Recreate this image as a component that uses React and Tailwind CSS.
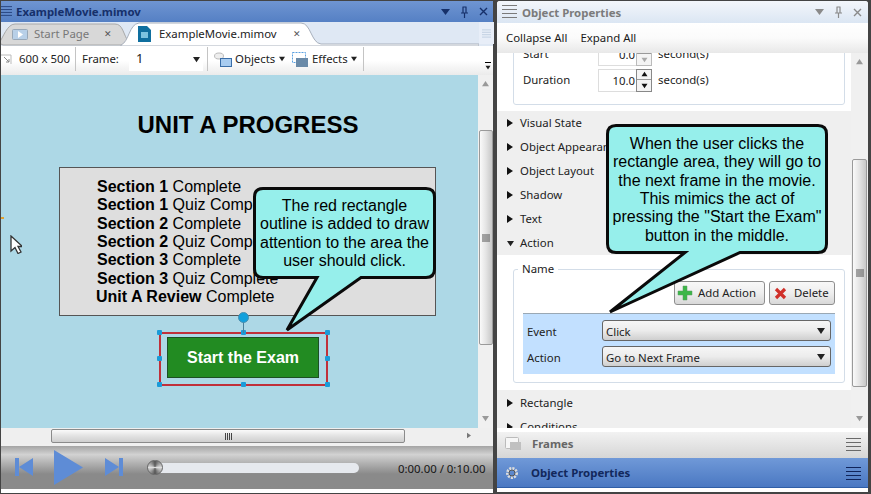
const ui = { fontFamily: '"Noto Sans", sans-serif' };

const Tri = ({ dir = 'right', className = '' }) => {
  const pts = { right: '0,0 6,4 0,8', down: '0,1 8,1 4,7', up: '0,7 8,7 4,1' };
  return (
    <svg viewBox={dir === 'right' ? '0 0 6 8' : '0 0 8 8'} className={className}>
      <polygon points={pts[dir]} fill="currentColor" />
    </svg>
  );
};

const Lines = ({ color, className = '' }) => (
  <svg viewBox="0 0 15 13" className={className}>
    <path d="M0 .5h15M0 4.5h15M0 8.5h15M0 12.5h15" stroke={color} strokeWidth="1" fill="none" />
  </svg>
);

const Grip = () => (
  <svg viewBox="0 0 8 8" className="w-2 h-2">
    <path d="M0 1h8M0 3h8M0 5h8M0 7h8" stroke="#555" strokeWidth="1" />
  </svg>
);

const WindowButtons = ({ color }) => (
  <div className="flex items-center gap-[10px]" style={{ color }}>
    <svg viewBox="0 0 9 6" className="w-[9px] h-[6px]"><polygon points="0,0 9,0 4.5,6" fill="currentColor" /></svg>
    <svg viewBox="0 0 9 12" className="w-[9px] h-3">
      <path d="M2.5 1h4M3 1v6M6 1v6M1 7h7M4.500 7v5" stroke="currentColor" strokeWidth="1.2" fill="none" />
    </svg>
    <svg viewBox="0 0 9 9" className="w-[9px] h-[9px]">
      <path d="M1 1l7 7M8 1l-7 7" stroke="currentColor" strokeWidth="1.4" fill="none" />
    </svg>
  </div>
);

const Sep = ({ className = '' }) => <div className={`w-px h-[24px] bg-[#c4c4c4] ${className}`} />;

function Tabs() {
  return (
    <div className="h-[24px] bg-[#dfe8f4] flex relative text-[11.4px]">
      <svg className="absolute left-0 top-0 w-[478px] h-[24px]" viewBox="0 0 478 24">
        <path d="M-2 21 C2 16 6 2 14 2 H114 C122 2 122 12 128 21 Q126 23 122 23 H2 Z" fill="#d8d8d8" stroke="#a8a8a8" />
        <path d="M120 23 C128 20 128 2 138 1 H300 C310 1 310 21 320 22 H478 V24 H120 Z" fill="#fff" stroke="#a8b0bc" />
      </svg>
      <div className="relative flex items-center w-[125px] pl-[11px] text-[#777]">
        <svg viewBox="0 0 16 11" className="w-4 h-[11px]">
          <rect x="0.500" y="0.500" width="15" height="10" rx="1" fill="#b8d0e8" stroke="#98a8b8" />
          <polygon points="6,2 11,5.500 6,9" fill="#fff" />
        </svg>
        <span className="ml-[6px] w-[70px]">Start Page</span>
        <span className="text-[9px] text-[#555]">✕</span>
      </div>
      <div className="relative flex items-center pl-[12px] text-[#222]">
        <svg viewBox="0 0 13 16" className="w-[13px] h-4">
          <path d="M0 0h9l4 4v12H0z" fill="#0f6f9f" />
          <path d="M3 6h7v6H3z" fill="#7cc4e0" />
        </svg>
        <span className="ml-[8px] w-[134px]">ExampleMovie.mimov</span>
        <span className="text-[9px] text-[#555]">✕</span>
      </div>
      <div className="absolute left-[478px] top-0 w-[15px] h-[22px] bg-[#e8eef8] flex flex-col items-center justify-center">
        <Lines color="#a8bcd4" className="w-[9px] h-[9px]" />
      </div>
    </div>
  );
}

function Toolbar() {
  return (
    <div className="h-[29px] pb-[3px] bg-gradient-to-b from-white via-white to-[#ebebeb] flex items-center text-[11.4px] text-[#222] relative">
      <svg viewBox="0 0 12 10" className="w-3 h-[10px]">
        <path d="M0 1h10v9" stroke="#bbb" fill="none" />
        <path d="M3 3l5 5M8 5v3H5" stroke="#888" fill="none" />
      </svg>
      <span className="ml-[6px] w-[50px] whitespace-nowrap">600 x 500</span>
      <Sep className="ml-[6px]" />
      <span className="ml-[6px] w-[36px]">Frame:</span>
      <div className="ml-[11px] w-[74px] h-[24px] bg-white flex items-center justify-between pl-[7px] pr-[3px] text-[13px]">
        1
        <Tri dir="down" className="w-[7px] h-[7px]" />
      </div>
      <Sep className="ml-[4px]" />
      <svg viewBox="0 0 18 15" className="ml-[6px] w-[18px] h-[15px]">
        <ellipse cx="5" cy="4" rx="4.500" ry="3" fill="#eee" stroke="#bbb" />
        <rect x="6.500" y="6.500" width="11" height="8" fill="#a8ccf0" stroke="#3a6ea8" />
      </svg>
      <span className="ml-[3px] w-[40px]">Objects</span>
      <Tri dir="down" className="ml-[4px] w-[6px] h-[6px]" />
      <svg viewBox="0 0 16 15" className="ml-[7px] w-4 h-[15px]">
        <rect x="0.500" y="0.500" width="13" height="10" fill="none" stroke="#5aa0e0" strokeDasharray="2 1" />
        <rect x="4" y="6" width="12" height="9" fill="#6a8aa8" />
      </svg>
      <span className="ml-[4px] w-[35px]">Effects</span>
      <Tri dir="down" className="ml-[4px] w-[6px] h-[6px]" />
      <Sep className="ml-[6px]" />
      <div className="absolute left-[484px] top-[16px] flex flex-col items-center">
        <div className="w-[6px] h-px bg-black mb-[2px]" />
        <Tri dir="down" className="w-[6px] h-[5px]" />
      </div>
    </div>
  );
}

// the slide itself is a free canvas, objects sit at their own coordinates
function Slide() {
  const rows = [
    ['Section 1', 'Complete'],
    ['Section 1', 'Quiz Complete'],
    ['Section 2', 'Complete'],
    ['Section 2', 'Quiz Complete'],
    ['Section 3', 'Complete'],
    ['Section 3', 'Quiz Complete'],
  ];
  const handles = [
    'left-[-4px] top-[-4px]', 'left-[80px] top-[-4px]', 'left-[164px] top-[-4px]',
    'left-[-4px] top-[22px]', 'left-[164px] top-[22px]',
    'left-[-4px] top-[48px]', 'left-[80px] top-[48px]', 'left-[164px] top-[48px]',
  ];
  return (
    <div className="relative w-[477px] h-[353px] bg-[#add8e6] overflow-hidden" style={{ fontFamily: '"Liberation Sans", sans-serif' }}>
      <div className="absolute left-0 top-[33px] w-[494px] text-center text-[24px] leading-[34px] font-bold text-black">UNIT A PROGRESS</div>
      <div className="absolute left-[58px] top-[92px] w-[377px] h-[149px] bg-[#dedede] border border-[#555] pl-[37px] pt-[10px] text-[16px] leading-[18.33px] text-black">
        {rows.map((r, i) => (
          <div key={i}><b>{r[0]}</b> {r[1]}</div>
        ))}
        <div className="-ml-px"><b>Unit A Review</b> Complete</div>
      </div>
      <div className="absolute left-[158px] top-[257px] w-[169px] h-[54px] border-2 border-[#c0303a]">
        {handles.map(h => (
          <div key={h} className={`absolute w-[5px] h-[5px] rounded-[1px] bg-[#1a9bd8] ${h}`} />
        ))}
        <div className="absolute left-[82px] top-[-15px] w-px h-[14px] bg-[#4a7f9a]" />
        <div className="absolute left-[77px] top-[-22px] w-[11px] h-[11px] rounded-full bg-[#12a0dc] border border-[#4a8fb0]" />
        <div className="absolute left-[6px] top-[3px] w-[152px] h-[41px] bg-[#228b22] border border-[#1d4f24] flex items-center justify-center text-white font-bold text-[16px]">Start the Exam</div>
      </div>
      <svg viewBox="0 0 12 19" className="absolute left-[9px] top-[160px] w-3 h-[19px]">
        <path d="M1 1v15l4-3.500 3 6 3-1.500-3-5.500h4.500z" fill="#fff" stroke="#333" strokeWidth="1.3" />
      </svg>
      <div className="absolute left-0 top-[142px] w-[3px] h-[2px] bg-[#e0a030]" />
    </div>
  );
}

function VScroll({ top, h, thumbWidth }) {
  return (
    <div className="relative flex flex-col items-center bg-[#f0f0f0] h-full">
      <Tri dir="up" className="mt-[5px] w-[7px] h-[7px] text-[#999]" />
      <div style={{ marginTop: top, height: h, width: thumbWidth }}>
        <div className="w-full h-full rounded-[2px] border border-[#9a9a9a] bg-gradient-to-r from-[#fafafa] via-[#e4e4e4] to-[#c8c8c8] flex items-center justify-center">
          <Grip />
        </div>
      </div>
      <Tri dir="down" className="absolute bottom-[6px] w-[7px] h-[7px] text-[#999]" />
    </div>
  );
}

function Player() {
  return (
    <div className="h-[43px] mt-[2px] bg-gradient-to-b from-[#a4a4a4] from-0% via-[#d2d2d2] via-[20%] to-[#8a8a8a] to-[65%] relative text-[11.4px] text-[#151515]">
      <svg viewBox="0 0 18 18" className="absolute left-[14px] top-[12px] w-[18px] h-[18px]">
        <path d="M0 0h4v18H0zM18 0v18L4 9z" fill="#5e8cd6" />
      </svg>
      <svg viewBox="0 0 29 35" className="absolute left-[53px] top-[4px] w-[29px] h-[35px]">
        <path d="M0 0l29 17.500L0 35z" fill="#5e8cd6" />
      </svg>
      <svg viewBox="0 0 18 18" className="absolute left-[104px] top-[12px] w-[18px] h-[18px]">
        <path d="M0 0l14 9L0 18zM14 0h4v18h-4z" fill="#5e8cd6" />
      </svg>
      <div className="absolute left-[147px] top-[17px] w-[211px] h-[10px] rounded-full bg-[#e6e9ee]" />
      <div className="absolute left-[146px] top-[14px] w-[16px] h-[15px] rounded-full border border-[#666] bg-[conic-gradient(#555,#ddd,#555,#ddd,#555)]" />
      <span className="absolute left-[397px] top-[14px]">0:00.00 / 0:10.00</span>
    </div>
  );
}

function Section({ label, open }) {
  return (
    <div className="h-6 flex items-center pl-[10px] text-[11.4px] text-[#222]">
      {open ? <Tri dir="down" className="w-[7px] h-[7px] text-[#222]" /> : <Tri dir="right" className="w-[6px] h-2 text-[#111]" />}
      <span className={open ? 'ml-[6px]' : 'ml-[7px]'}>{label}</span>
    </div>
  );
}

function Spin({ disabled }) {
  const c = disabled ? 'text-[#aaa] border-[#bbb]' : 'text-[#111] border-[#888]';
  return (
    <div className={`w-[16px] h-[23px] border ${c} flex flex-col items-center justify-around bg-[#f4f4f4]`}>
      <Tri dir="up" className="w-[7px] h-[6px]" />
      <div className="w-full h-px bg-[#999]" />
      <Tri dir="down" className="w-[7px] h-[6px]" />
    </div>
  );
}

function Select({ value }) {
  return (
    <div className="w-[229px] h-[21px] rounded-[3px] border border-[#666] bg-gradient-to-b from-[#f6f6f6] via-[#ececec] to-[#cfcfcf] flex items-center justify-between pl-[3px] pr-[5px] text-[11.4px] text-[#222]">
      <span className="pt-[2px]">{value}</span>
      <Tri dir="down" className="w-2 h-2" />
    </div>
  );
}

function ToolButton({ icon, label, className }) {
  return (
    <div className={`h-[24px] rounded-[3px] border border-[#8e8e8e] bg-gradient-to-b from-[#f8f8f8] via-[#eeeeee] to-[#d8d8d8] flex items-center text-[11.4px] text-[#222] ${className}`}>
      {icon}
      {label}
    </div>
  );
}

function Properties() {
  return (
    <div className="flex h-[375px] overflow-hidden">
      <div className="w-[354px] shrink-0 overflow-hidden text-[11.4px] text-[#222]">
        <div className="h-[58px] overflow-hidden bg-white pl-[16px]">
          <div className="-mt-[20px] w-[332px] h-[72px] rounded-[3px] border border-[#d3dde8] pl-[9px] pt-[7px]">
            <div className="flex items-center h-[26px]">
              <span className="w-[75px]">Start</span>
              <div className="w-[38px] h-[23px] leading-[21px] border border-r-0 border-[#dddddd] text-right pr-px">0.0</div>
              <Spin disabled />
              <span className="ml-[6px]">second(s)</span>
            </div>
            <div className="flex items-center h-[26px]">
              <span className="w-[75px]">Duration</span>
              <div className="w-[38px] h-[23px] leading-[21px] border border-r-0 border-[#dddddd] text-right pr-px">10.0</div>
              <Spin />
              <span className="ml-[6px]">second(s)</span>
            </div>
          </div>
        </div>
        <div className="bg-[#efefef]">
          <Section label="Visual State" />
          <Section label="Object Appearance" />
          <Section label="Object Layout" />
          <Section label="Shadow" />
          <Section label="Text" />
          <Section label="Action" open />
        </div>
        <div className="h-[135px] bg-white pl-[16px] pt-[14px]">
          <div className="relative w-[332px] h-[114px] rounded-[3px] border border-[#d3dde8] pt-[11px]">
            <span className="absolute left-[4px] -top-[10px] bg-white px-1">Name</span>
            <div className="flex justify-end gap-[4px] pr-[9px]">
              <ToolButton
                className="w-[91px] pl-[2px]"
                label={<span className="ml-[5px]">Add Action</span>}
                icon={
                  <svg viewBox="0 0 16 16" className="w-4 h-4">
                    <path d="M6 1h4v5h5v4h-5v5H6v-5H1V6h5z" fill="#3cb648" stroke="#5a9a60" strokeWidth=".5" />
                  </svg>
                }
              />
              <ToolButton
                className="w-[66px] pl-[4px]"
                label={<span className="ml-[7px]">Delete</span>}
                icon={
                  <svg viewBox="0 0 13 13" className="w-[13px] h-[13px]">
                    <path d="M2 2l9 9M11 2l-9 9" stroke="#d0302a" strokeWidth="3.200" />
                  </svg>
                }
              />
            </div>
            <div className="mt-[8px] ml-[9px] w-[312px] h-[61px] bg-[#c2e0ff] border-t border-[#9aa8b4] pt-[6px] pl-[4px]">
              <div className="flex items-center">
                <span className="w-[75px] pt-[2px]">Event</span>
                <Select value="Click" />
              </div>
              <div className="flex items-center mt-[5px]">
                <span className="w-[75px] pt-[2px]">Action</span>
                <Select value="Go to Next Frame" />
              </div>
            </div>
          </div>
        </div>
        <div className="bg-[#efefef] h-[40px] pt-px">
          <Section label="Rectangle" />
          <Section label="Conditions" />
        </div>
      </div>
      <div className="w-[17px] ml-0 flex-1">
        <VScroll top={94} h={228} thumbWidth={15} />
      </div>
    </div>
  );
}

function Callout({ className, box, children, textClass }) {
  const { w, h, base, tip } = box;
  const d = `M10 1.500 H${w - 10} Q${w - 1.5} 1.500 ${w - 1.5} 10 V${h - 10} Q${w - 1.5} ${h - 1.5} ${w - 10} ${h - 1.5} H${base[1]} L${tip[0]} ${tip[1]} L${base[0]} ${h - 1.5} H10 Q1.500 ${h - 1.5} 1.500 ${h - 10} V10 Q1.500 1.500 10 1.500 Z`;
  return (
    <div className={`absolute ${className}`}>
      <svg className="absolute left-0 top-0 overflow-visible" width={w} height={tip[1]}>
        <path d={d} fill="#96efeb" stroke="#0a0a0a" strokeWidth="3" strokeLinejoin="miter" />
      </svg>
      <div className={`relative text-center text-black ${textClass}`} style={{ fontFamily: '"Liberation Sans", sans-serif' }}>
        {children}
      </div>
    </div>
  );
}

export default function App() {
  return (
    <div className="relative w-[871px] h-[494px] overflow-hidden bg-[#444] pt-px pl-px flex" style={ui}>
      {/* movie pane */}
      <div className="w-[492px] h-[492px] bg-[#f0f0f0] flex flex-col">
        <div className="h-[21px] bg-gradient-to-b from-[#6f95d2] to-[#5580c4] flex items-center justify-between pr-[5px]">
          <div className="flex items-center">
            <Lines color="#16306a" className="w-[11px] h-[12px]" />
            <span className="ml-[4px] pt-[1px] text-[11.4px] font-bold text-[#16306a]">ExampleMovie.mimov</span>
          </div>
          <WindowButtons color="#16306a" />
        </div>
        <Tabs />
        <Toolbar />
        <div className="flex h-[353px]">
          <Slide />
          <div className="w-[15px]">
            <VScroll top={43} h={215} thumbWidth={14} />
          </div>
        </div>
        <div className="h-[16px] bg-[#efefef] flex items-center relative">
          <div className="ml-[50px] w-[354px] h-[14px] rounded-[2px] border border-[#8a8a8a] bg-gradient-to-b from-[#fafafa] via-[#e2e2e2] to-[#cfcfcf] flex items-center justify-center">
            <svg viewBox="0 0 8 7" className="w-[9px] h-[7px]"><path d="M1 0v7M3 0v7M5 0v7M7 0v7" stroke="#444" /></svg>
          </div>
          <Tri dir="right" className="absolute left-[466px] top-[4px] w-[4px] h-[7px] text-[#777]" />
        </div>
        <Player />
        <div className="flex-1 bg-white" />
      </div>

      {/* properties pane */}
      <div className="ml-[4px] w-[371px] h-[491px] flex flex-col rounded-t-[3px] overflow-hidden bg-white">
        <div className="h-[22px] shrink-0 bg-gradient-to-b from-[#f3f6fb] to-[#dbe6f3] flex items-center justify-between pr-[6px] pl-[5px]">
          <div className="flex items-center">
            <Lines color="#7a7a7a" className="w-[15px] h-[13px]" />
            <span className="ml-[5px] pt-[1px] text-[11.4px] font-bold text-[#7b7b7b]">Object Properties</span>
          </div>
          <WindowButtons color="#8a8a8a" />
        </div>
        <div className="h-[30px] shrink-0 bg-gradient-to-b from-white via-[#fbfbfb] to-[#e8e8e8] flex items-center pl-[9px] gap-[13px] text-[11.4px] text-[#1a1a1a]">
          <span>Collapse All</span>
          <span>Expand All</span>
        </div>
        <Properties />
        <div className="h-[30px] shrink-0 border-t-[4px] border-white bg-gradient-to-b from-[#f2f2f2] to-[#d6d6d6] flex items-center justify-between pl-[8px] pr-[7px] pb-[2px]">
          <div className="flex items-center">
            <svg viewBox="0 0 16 13" className="w-4 h-[13px]">
              <rect x="0.500" y="0.500" width="13" height="11" rx="1" fill="#f6f6f6" stroke="#bbb" />
              <rect x="5" y="5" width="11" height="8" fill="#c0c0c0" />
            </svg>
            <span className="ml-[11px] text-[11.4px] font-bold text-[#666]">Frames</span>
          </div>
          <Lines color="#6a6a6a" className="w-[15px] h-[13px]" />
        </div>
        <div className="h-[30px] shrink-0 bg-gradient-to-b from-[#7099d8] to-[#4a78c2] border-b border-[#2f5ea6] flex items-center justify-between pl-[8px] pr-[7px] pt-[1px]">
          <div className="flex items-center">
            <svg viewBox="0 0 14 14" className="w-[14px] h-[14px]">
              <circle cx="7" cy="7" r="4.500" fill="none" stroke="#ddd" strokeWidth="3" strokeDasharray="2 1" />
              <circle cx="7" cy="7" r="3" fill="none" stroke="#555" strokeWidth="1" />
            </svg>
            <span className="ml-[12px] text-[11.4px] font-bold text-[#12285c]">Object Properties</span>
          </div>
          <Lines color="#10245a" className="w-[15px] h-[13px]" />
        </div>
      </div>

      <Callout
        className="left-[253px] top-[187px] w-[183px]"
        box={{ w: 183, h: 92, base: [64, 108], tip: [34, 143] }}
        textClass="pt-[10px] text-[16px] leading-[18.33px]"
      >
        The red rectangle<br />outline is added to draw<br />attention to the area the<br />user should click.
      </Callout>
      <Callout
        className="left-[606px] top-[124px] w-[222px]"
        box={{ w: 222, h: 130, base: [79, 134], tip: [4, 188] }}
        textClass="pt-[11px] text-[16px] leading-[18.33px]"
      >
        When the user clicks the<br />rectangle area, they will go to<br />the next frame in the movie.<br />This mimics the act of<br />pressing the "Start the Exam"<br />button in the middle.
      </Callout>
    </div>
  );
}
